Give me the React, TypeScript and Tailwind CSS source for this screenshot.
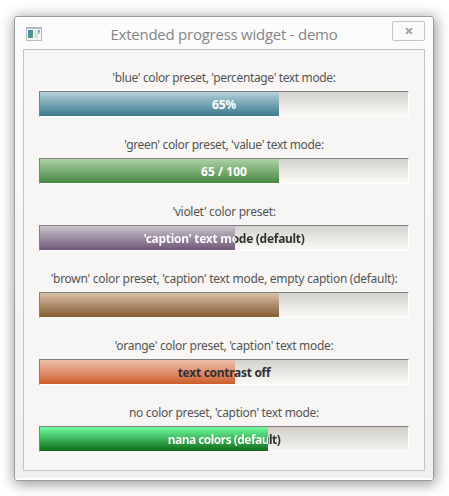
type Item = {
  label: string;
  labelSpacing: string;
  caption: string;
  fill: string;
  text: string;
  track?: string;
};

const contrast = 'bg-clip-text text-transparent';
const defaultTrack = 'from-[#d3d2ce] to-[#fbfaf6]';

const items: Item[] = [
  {
    label: "'blue' color preset, 'percentage' text mode:",
    labelSpacing: 'tracking-[-0.36px]',
    caption: '65%',
    fill: 'w-[239px] from-[#b4d2da] to-[#3b7a8d]',
    text: 'text-white tracking-[-0.2px]',
  },
  {
    label: "'green' color preset, 'value' text mode:",
    labelSpacing: 'tracking-[-0.35px]',
    caption: '65 / 100',
    fill: 'w-[239px] from-[#add2a5] to-[#468a41]',
    text: 'text-white tracking-[0.05px]',
  },
  {
    label: "'violet' color preset:",
    labelSpacing: 'tracking-[-0.3px]',
    caption: "'caption' text mode (default)",
    fill: 'w-[195px] from-[#c9c5ca] to-[#705779]',
    text: `${contrast} tracking-[-0.29px] bg-[linear-gradient(90deg,#fff_195px,#303030_195px)]`,
  },
  {
    label: "'brown' color preset, 'caption' text mode, empty caption (default):",
    labelSpacing: 'tracking-[-0.28px]',
    caption: '',
    fill: 'w-[239px] from-[#d9c2a9] to-[#855b32]',
    text: 'text-white',
  },
  {
    label: "'orange' color preset, 'caption' text mode:",
    labelSpacing: 'tracking-[-0.3px]',
    caption: 'text contrast off',
    fill: 'w-[195px] from-[#efc0ac] to-[#cd5d29]',
    text: 'text-[#303030] tracking-[-0.29px]',
  },
  {
    label: "no color preset, 'caption' text mode:",
    labelSpacing: 'tracking-[-0.31px]',
    caption: 'nana colors (default)',
    fill: 'w-[228px] from-[#6fffa2] to-[#0c6d14]',
    text: `${contrast} tracking-[-0.53px] bg-[linear-gradient(90deg,#fff_228px,#303030_228px)]`,
    track: 'from-[#d2cfc8] to-[#f5f4f2]',
  },
];

function Progress({ label, labelSpacing, caption, fill, text, track = defaultTrack }: Item) {
  return (
    <div className="flex h-[67px] flex-col">
      <div className={`h-[23px] whitespace-nowrap text-center text-[12px] leading-[20px] text-[#555] ${labelSpacing}`}>
        {label}
      </div>
      <div className="h-[26px] border border-b-white border-l-[#808080] border-r-white border-t-[#808080]">
        <div className={`relative h-[24px] bg-linear-to-b ${track}`}>
          <div className={`h-[24px] bg-linear-to-b ${fill}`} />
          <div
            className={`absolute inset-0 whitespace-nowrap text-center text-[12px] font-bold leading-[25px] ${text}`}
          >
            {caption}
          </div>
        </div>
      </div>
    </div>
  );
}

function AppIcon() {
  return (
    <svg className="mt-[10px] ml-[9px] h-[14px] w-[16px]" viewBox="0 0 16 14" shapeRendering="crispEdges">
      <defs>
        <linearGradient id="screen" x1="0" y1="0" x2="1" y2="1">
          <stop offset="0" stopColor="#4b78a8" />
          <stop offset="1" stopColor="#53a980" />
        </linearGradient>
      </defs>
      <rect x="0" y="0" width="16" height="14" fill="#b7babf" />
      <rect x="1" y="2" width="14" height="11" fill="#f5f6f7" />
      <rect x="2" y="3" width="5" height="8" fill="url(#screen)" />
      <rect x="8" y="3" width="4" height="8" fill="#dfe0e0" />
      <rect x="12" y="3" width="2" height="2" fill="#7ea9c6" />
      <rect x="12" y="5" width="2" height="2" fill="#9dd0b4" />
    </svg>
  );
}

export default function App() {
  return (
    <div className="h-[496px] w-[449px] overflow-hidden bg-white pl-[14px] pt-[16px] font-['Noto_Sans','Open_Sans',sans-serif]">
      <div className="h-[465px] w-[420px] rounded-[3px] border border-[#9b9b9b] bg-linear-to-b from-[#fcfcfc] to-[#f0f0f0] shadow-[inset_0_1px_0_#fff,inset_0_-2px_0_#fff,1px_2px_14px_1px_rgba(0,0,0,0.42)]">
        <div className="flex h-[32px] justify-between">
          <div className="w-[60px] pl-[2px]">
            <AppIcon />
          </div>
          <h1 className="whitespace-nowrap pt-[5px] font-['Open_Sans',sans-serif] text-[15px] leading-[24px] tracking-[-0.25px] text-[#858585]">
            Extended progress widget - demo
          </h1>
          <div className="flex w-[60px] justify-end pr-[8px] pt-[4px]">
            <button className="flex h-[20px] w-[33px] items-center justify-center rounded-[2px] border border-[#c5c5c5] bg-[#fafafa]">
              <svg className="h-[6px] w-[8px]" viewBox="0 0 8 6">
                <path d="M1 0L7 6M7 0L1 6" stroke="#a0a0a0" strokeWidth="1.8" />
              </svg>
            </button>
          </div>
        </div>
        <div className="ml-[8px] h-[422px] w-[402px] overflow-hidden border border-[#c4c4c4] bg-[#f7f6f4] px-[15px] pt-[18px]">
          {items.map((item) => (
            <Progress key={item.label} {...item} />
          ))}
        </div>
      </div>
    </div>
  );
}
